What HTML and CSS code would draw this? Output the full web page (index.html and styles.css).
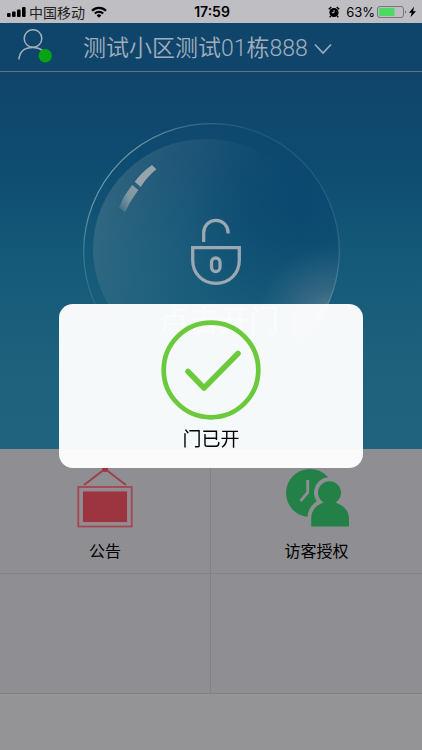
FILE: index.html
```html
<!DOCTYPE html>
<html lang="zh-CN">
<head>
<meta charset="utf-8">
<meta name="viewport" content="width=device-width, initial-scale=1">
<title>门已开</title>
<link rel="stylesheet" href="styles.css">
</head>
<body>
<div class="screen">
  <div class="status">
    <div class="status-side">
      <svg width="20" height="12" viewBox="0 0 20 12" aria-hidden="true"><rect x="0" y="7" width="3.600" height="4" rx="1"/><rect x="5" y="5.500" width="3.600" height="5.500" rx="1"/><rect x="10" y="3.500" width="3.600" height="7.500" rx="1"/><rect x="15" y="1" width="3.600" height="10" rx="1"/></svg>
      <span class="carrier">中国移动</span>
      <svg class="wifi" width="16" height="12" viewBox="0 0 16 12" fill="none" stroke="#000" stroke-width="2.200" aria-hidden="true"><path d="M1 4.700a10 10 0 0 1 14 0"/><path d="M3.800 7.500a6 6 0 0 1 8.400 0"/><path d="M8 11.700 5.700 9.400a3.300 3.300 0 0 1 4.600 0Z" fill="#000" stroke="none"/></svg>
    </div>
    <span class="time">17:59</span>
    <div class="status-side status-right">
      <svg width="12" height="12" viewBox="0 0 12 12" aria-hidden="true"><circle cx="6" cy="6.500" r="4.600"/><path d="M.8 3.200 3.300 1M11.200 3.200 8.700 1M2.800 10 1.800 11.300M9.200 10l1 1.300" stroke="#000" stroke-width="1.500"/><path d="M6 4v2.700H3.800" fill="none" stroke="#bfbec3"/></svg>
      <span class="percent">63%</span>
      <svg width="40" height="12" viewBox="0 0 40 12" aria-hidden="true"><rect x=".5" y=".5" width="26" height="11" rx="2.500" fill="none" stroke="#77767a"/><rect x="2" y="2" width="15.500" height="8" rx="1" fill="#4cd964"/><path d="M28 4.200a2 2 0 0 1 0 3.600Z" fill="#77767a"/><path d="M37 .8 32 6.700h2.700L33.500 11.300 39 5.200h-2.800Z"/></svg>
    </div>
  </div>

  <header class="header">
    <button class="profile" type="button" aria-label="我的">
      <svg width="36" height="36" viewBox="0 0 36 36" fill="none" aria-hidden="true"><circle cx="15" cy="9.500" r="8.800" stroke="#a1aebb" stroke-width="1.500"/><path d="M.9 30.500C1.500 23 6.500 18.400 15 18.400c4 0 7 1.100 9.500 3" stroke="#a1aebb" stroke-width="1.500"/><circle cx="27.200" cy="26.700" r="6.700" fill="#06a315"/></svg>
    </button>
    <button class="place" type="button">
      <span>测试小区测试01栋888</span>
      <svg width="18" height="12" viewBox="0 0 18 12" fill="none" stroke="#9daebb" stroke-width="1.600" aria-hidden="true"><path d="m1 1.500 8 8.500 8-8.500"/></svg>
    </button>
  </header>

  <section class="hero">
    <button class="unlock" type="button">
      <svg class="bubble" viewBox="84 123 257 257" aria-hidden="true">
        <defs>
          <linearGradient id="rim" x1="0" y1=".1" x2="1" y2=".9">
            <stop offset="0" stop-color="#9cc" stop-opacity=".3"/><stop offset=".08" stop-color="#c9dbe2" stop-opacity=".65"/><stop offset=".2" stop-color="#9cc" stop-opacity=".3"/><stop offset=".35" stop-color="#8bb5d0" stop-opacity=".14"/><stop offset=".75" stop-color="#8bb5d0" stop-opacity=".2"/><stop offset="1" stop-color="#ccd" stop-opacity=".4"/>
          </linearGradient>
          <linearGradient id="body" x1="0" y1=".1" x2="1" y2=".5">
            <stop offset="0" stop-color="#7d969b" stop-opacity=".36"/><stop offset=".45" stop-color="#43738e" stop-opacity=".2"/><stop offset=".8" stop-color="#0c466f" stop-opacity="0"/>
          </linearGradient>
          <radialGradient id="shade" gradientUnits="userSpaceOnUse" cx="300" cy="215" r="125">
            <stop offset="0" stop-color="#09446e" stop-opacity=".7"/><stop offset="1" stop-color="#09446e" stop-opacity="0"/>
          </radialGradient>
          <radialGradient id="glow" gradientUnits="userSpaceOnUse" cx="330" cy="318" r="72">
            <stop offset="0" stop-color="#8b9aa4" stop-opacity=".6"/><stop offset=".4" stop-color="#6d8796" stop-opacity=".35"/><stop offset="1" stop-color="#5b8196" stop-opacity="0"/>
          </radialGradient>
          <linearGradient id="shine" x1="1" y1="0" x2="0" y2="1">
            <stop offset="0" stop-color="#8c9ea8"/><stop offset=".5" stop-color="#7d949f"/><stop offset="1" stop-color="#7d949f" stop-opacity=".15"/>
          </linearGradient>
        </defs>
        <circle cx="212.500" cy="251.500" r="128" fill="url(#shade)"/>
        <ellipse cx="207" cy="249" rx="113" ry="110" fill="url(#body)"/>
        <circle cx="212.500" cy="251.500" r="128" fill="url(#glow)"/>
        <circle cx="212.500" cy="251.500" r="127.800" fill="none" stroke="url(#rim)" stroke-width="1.200"/>
        <path d="M153 165l4.300 4.300Q148 177 141.700 187l-6-5.300Q143 172 153 165Z" fill="#98a4ab"/>
        <path d="M133.300 185l6 5Q131 201 126 212.300l-6-5Q125 195 133.300 185Z" fill="url(#shine)"/>
        <g fill="none" stroke="#9ba7b1" stroke-width="3.300">
          <path d="M204.700 242v-9.500a12.200 12.200 0 0 1 24.400 0V233.500"/>
          <path d="M193.700 247.700h46.600V260c0 14-10 23.300-23.300 23.300S193.700 274 193.700 260Z"/>
          <rect x="212.500" y="258" width="8.500" height="13.500" rx="4.200"/>
        </g>
      </svg>
      <span class="unlock-label">点击开门</span>
    </button>
  </section>

  <nav class="menu">
    <a class="cell" href="#notice">
      <svg width="58" height="62" viewBox="0 0 58 62" aria-hidden="true"><path d="M8 18 29 2l21 16" fill="none" stroke="#a33c49" stroke-width="1.800"/><circle cx="29" cy="2" r="3" fill="#a03442"/><rect x="2.300" y="20" width="53.400" height="39.500" fill="none" stroke="#ab4452" stroke-width="1.800"/><rect x="6.500" y="24" width="45" height="31.500" fill="#9d3541" stroke="#99828a" stroke-width="1"/></svg>
      <span>公告</span>
    </a>
    <a class="cell" href="#visitor">
      <svg width="66" height="62" viewBox="0 0 66 62" aria-hidden="true"><circle cx="26" cy="26" r="24" fill="#238148"/><path d="M27.200 59.500V52c0-9 4.800-13.700 12.300-16.500a11.500 11.500 0 1 1 12 0C59 38.300 65 43 65 52v7.500Z" fill="#238148" stroke="#8f8e93" stroke-width="8" paint-order="stroke"/><path d="M23.700 13v12.500L16.500 34" fill="none" stroke="#8f8e93" stroke-width="2.800"/></svg>
      <span>访客授权</span>
    </a>
    <div class="cell"></div>
    <div class="cell"></div>
  </nav>
</div>

<div class="overlay">
  <div class="dialog" role="alertdialog" aria-labelledby="result">
    <svg width="100" height="100" viewBox="0 0 100 100" fill="none" stroke="#6bca3b" stroke-linecap="round" stroke-linejoin="round" aria-hidden="true"><circle cx="50" cy="50" r="47.300" stroke-width="4.700"/><path d="m27 51.500 16 16.500 34-34.500" stroke-width="5.500"/></svg>
    <p id="result" class="result">门已开</p>
  </div>
</div>
</body>
</html>
```
FILE: styles.css
```css
* {
  box-sizing: border-box;
}

body {
  margin: 0;
  background: #949396;
  color: #000;
  font-family: "Noto Sans CJK SC", sans-serif;
}

button {
  padding: 0;
  border: 0;
  background: none;
  color: inherit;
  font: inherit;
}

svg {
  display: block;
  flex: none;
}

.screen {
  display: flex;
  flex-direction: column;
  min-height: 100vh;
}

.status {
  display: grid;
  grid-template-columns: 1fr auto 1fr;
  align-items: center;
  height: 23px;
  padding: 0 5px 0 7px;
  background: #bfbec3;
  font-size: 14px;
  line-height: 20px;
}

.status-side {
  display: flex;
  align-items: center;
  gap: 2px;
}

.status-right {
  justify-content: flex-end;
}

.carrier {
  color: #222;
}

.wifi {
  margin-left: 4px;
}

.time {
  font-family: Inter, sans-serif;
  font-size: 14px;
  font-weight: 600;
}

.percent {
  margin-left: 4px;
  font-family: Inter, sans-serif;
  font-size: 13px;
}

.header {
  display: flex;
  align-items: center;
  gap: 29px;
  height: 49px;
  padding: 0 18px;
  border-bottom: 1px solid #5b7491;
  background: #10456b;
}

.place {
  display: flex;
  align-items: center;
  gap: 6px;
  padding-top: 3px;
  color: #a1afbc;
  font-family: Roboto, "Noto Sans CJK SC", sans-serif;
  font-size: 23px;
  font-weight: 350;
  line-height: 32px;
}

.hero {
  display: flex;
  justify-content: center;
  height: 377px;
  padding-top: 51px;
  background: linear-gradient(#10446b, #0e4b70 24%, #145978 48%, #1d617d 78%, #20637f);
}

.unlock {
  display: grid;
  align-self: flex-start;
  width: 257px;
}

.bubble {
  grid-area: 1 / 1;
  width: 100%;
}

.unlock-label {
  grid-area: 1 / 1;
  align-self: end;
  padding: 0 0 40px 16px;
  color: #8a9ba8;
  font-size: 30px;
  line-height: 44px;
}

.menu {
  display: grid;
  grid-template-columns: 1fr 1fr;
  grid-template-rows: 125px 120px;
  background: #8f8e93;
}

.cell {
  display: flex;
  flex-direction: column;
  align-items: center;
  gap: 9px;
  padding-top: 18px;
  border-bottom: 1px solid #838287;
  color: #000;
  font-size: 16px;
  font-weight: 400;
  line-height: 24px;
  text-decoration: none;
}

.cell:nth-child(odd) {
  border-right: 1px solid #838287;
}

.overlay {
  position: fixed;
  inset: 22px 0 0;
  display: flex;
  align-items: center;
  justify-content: center;
}

.dialog {
  display: flex;
  flex-direction: column;
  align-items: center;
  gap: 4px;
  width: 72%;
  padding: 16px;
  border-radius: 14px;
  background: rgba(255, 255, 255, 0.96);
}

.result {
  margin: 0;
  font-size: 19px;
  line-height: 28px;
}
```
